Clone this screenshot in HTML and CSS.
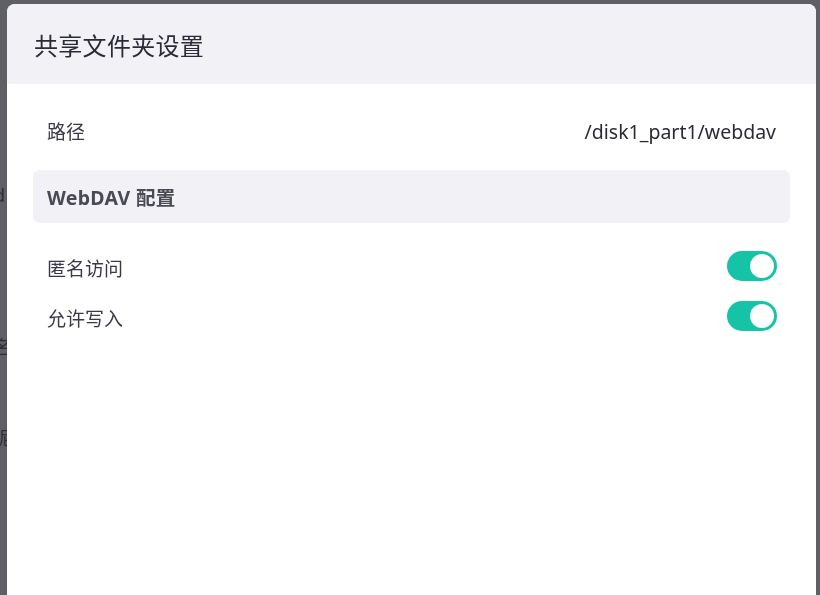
FILE: index.html
```html
<!DOCTYPE html>
<html lang="zh-CN">
<head>
<meta charset="utf-8">
<title>共享文件夹设置</title>
<link rel="stylesheet" href="styles.css">
</head>
<body>
<div class="backdrop">
  <div class="bg-page">
    <div class="bg-line l1">d</div>
    <div class="bg-line l2">名</div>
    <div class="bg-line l3">呢</div>
  </div>
</div>
<div class="modal">
  <div class="modal-header">
    <h1 class="modal-title">共享文件夹设置</h1>
  </div>
  <div class="modal-body">
    <div class="row">
      <span class="label">路径</span>
      <span class="value">/disk1_part1/webdav</span>
    </div>
    <div class="section">WebDAV 配置</div>
    <div class="rows">
      <div class="row">
        <span class="label">匿名访问</span>
        <span class="switch on"><span class="knob"></span></span>
      </div>
      <div class="row">
        <span class="label">允许写入</span>
        <span class="switch on"><span class="knob"></span></span>
      </div>
    </div>
  </div>
</div>
</body>
</html>
```
FILE: styles.css
```css
html, body {
  margin: 0;
  padding: 0;
  height: 100%;
}
body {
  background: #5f5f66;
  font-family: "Noto Sans", "Noto Sans CJK SC", sans-serif;
  color: #33333f;
  overflow: hidden;
}
.backdrop {
  position: fixed;
  inset: 0;
  background: #5f5f66;
}
.bg-page {
  position: relative;
  height: 100%;
  font-size: 18px;
  color: #2e2e34;
}
.bg-line {
  position: absolute;
  left: -6px;
}
.l1 { top: 183px; }
.l2 { top: 333px; }
.l3 { top: 424px; }

.modal {
  position: absolute;
  left: 7px;
  top: 4px;
  width: 809px;
  bottom: -20px;
  background: #ffffff;
  border-radius: 8px 8px 0 0;
  overflow: hidden;
}
.modal-header {
  height: 80px;
  background: #f1f1f6;
  display: flex;
  align-items: center;
  padding: 0 27px;
  box-sizing: border-box;
}
.modal-title {
  margin: 0;
  font-size: 24px;
  font-weight: 400;
  color: #2b2b38;
  letter-spacing: 0.3px;
}
.modal-body {
  padding: 22px 26px 0 26px;
}
.row {
  height: 50px;
  display: flex;
  align-items: center;
  justify-content: space-between;
  padding: 0 14px;
}
.label {
  font-size: 19px;
  color: #3a3a46;
}
.value {
  font-size: 19.5px;
  color: #2b2b38;
}
.section {
  margin-top: 14px;
  height: 53px;
  background: #f1f1f6;
  border-radius: 7px;
  display: flex;
  align-items: center;
  padding: 0 14px;
  font-size: 19.5px;
  font-weight: 700;
  color: #4a4a55;
  letter-spacing: 0.3px;
}
.rows {
  margin-top: 20px;
}
.switch {
  width: 50px;
  height: 30px;
  border-radius: 15px;
  background: #15c3a7;
  position: relative;
  display: inline-block;
  margin-right: -1px;
  margin-bottom: 5px;
}
.knob {
  position: absolute;
  top: 3px;
  right: 3px;
  width: 24px;
  height: 24px;
  border-radius: 50%;
  background: #ffffff;
}
```
